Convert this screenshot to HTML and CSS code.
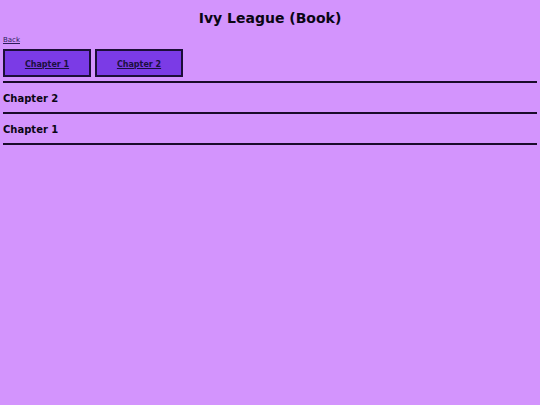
FILE: index.html
```html
<!DOCTYPE html>
<html>
<head>
<meta charset="utf-8">
<link rel="stylesheet" href="styles.css">
</head>
<body>
<h1 class="title">Ivy League (Book)</h1>
<a class="back" href="#">Back</a>
<nav class="tabs">
  <a class="tab" href="#">Chapter 1</a>
  <a class="tab" href="#">Chapter 2</a>
</nav>
<div class="chapter">Chapter 2</div>
<div class="chapter">Chapter 1</div>
</body>
</html>
```
FILE: styles.css
```css
html, body {
  margin: 0;
  background: #d394fd;
}
body {
  padding: 0 3px;
  font-family: "DejaVu Sans", sans-serif;
  color: #000;
}
.title {
  margin: 0;
  padding-top: 9px;
  height: 25px;
  text-align: center;
  font-size: 14px;
  font-weight: bold;
  line-height: 18px;
  color: #0a0614;
}
.back {
  display: block;
  margin-top: 1px;
  font-size: 7px;
  line-height: 10px;
  color: #2a1a5a;
}
.tabs {
  display: flex;
  gap: 4px;
  margin-top: 4px;
  padding-bottom: 4px;
  border-bottom: 2px solid #1a0a2a;
}
.tab {
  width: 84px;
  height: 20px;
  padding-top: 4px;
  display: flex;
  align-items: center;
  justify-content: center;
  background: #7b3be6;
  border: 2px solid #1c0e38;
  font-size: 8px;
  line-height: 12px;
  font-weight: bold;
  color: #1a1040;
}
.chapter {
  display: flex;
  align-items: center;
  padding-top: 1px;
  box-sizing: border-box;
  height: 31px;
  font-size: 10px;
  font-weight: bold;
  color: #0a0614;
  border-bottom: 2px solid #1a0a2a;
}
```
